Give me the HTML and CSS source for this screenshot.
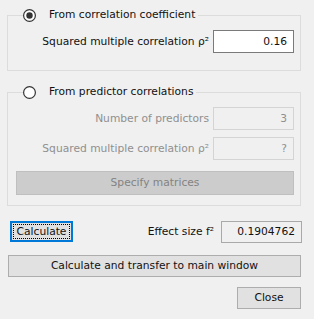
FILE: index.html
```html
<!DOCTYPE html>
<html>
<head>
<meta charset="utf-8">
<link rel="stylesheet" href="styles.css">
</head>
<body>
<div class="dialog">
  <fieldset class="group g1">
    <legend class="legend">
      <svg class="radio" width="13" height="13" viewBox="0 0 13 13"><circle cx="6.5" cy="6.5" r="5.9" fill="#ffffff" stroke="#333333" stroke-width="1.2"/><circle cx="6.5" cy="6.5" r="3.2" fill="#333333"/></svg>
      <span>From correlation coefficient</span>
    </legend>
    <div class="row">
      <span class="lbl">Squared multiple correlation ρ²</span>
      <div class="field">0.16</div>
    </div>
  </fieldset>

  <fieldset class="group g2">
    <legend class="legend">
      <svg class="radio" width="13" height="13" viewBox="0 0 13 13"><circle cx="6.5" cy="6.5" r="5.9" fill="#ffffff" stroke="#333333" stroke-width="1.2"/></svg>
      <span>From predictor correlations</span>
    </legend>
    <div class="row">
      <span class="lbl dis">Number of predictors</span>
      <div class="field dis">3</div>
    </div>
    <div class="row row2">
      <span class="lbl dis">Squared multiple correlation ρ²</span>
      <div class="field dis">?</div>
    </div>
    <div class="btn btn-dis">Specify matrices</div>
  </fieldset>

  <div class="calc-row">
    <button class="btn btn-focus"><span class="focus-rect">Calculate</span></button>
    <span class="lbl effect">Effect size f²</span>
    <div class="field out">0.1904762</div>
  </div>

  <button class="btn btn-full">Calculate and transfer to main window</button>

  <div class="close-row">
    <button class="btn btn-close">Close</button>
  </div>
</div>
</body>
</html>
```

FILE: styles.css
```css
html, body {
  margin: 0;
  padding: 0;
  background: #f0f0f0;
}
body {
  font-family: "DejaVu Sans", Verdana, sans-serif;
  font-size: 10.7px;
  color: #111111;
}
.dialog {
  width: 294px;
  padding: 8px 13px 0 7px;
}
.group {
  margin: 0;
  padding: 8px 6px 17px 7px;
  border: 1px solid #dcdcdc;
  min-width: 0;
}
.g2 {
  margin-top: 14px;
  padding-bottom: 10px;
}
.legend {
  display: flex;
  align-items: center;
  height: 14px;
  line-height: 14px;
  padding: 0 3px 0 0;
  margin-left: 8px;
}
.radio {
  display: block;
  margin-right: 13px;
}
.row {
  display: flex;
  justify-content: flex-end;
  align-items: center;
  gap: 4px;
}
.row2 {
  margin-top: 7px;
}
.lbl {
  white-space: nowrap;
}
.lbl.dis {
  color: #8f8f8f;
}
.field {
  box-sizing: border-box;
  width: 81px;
  height: 23px;
  line-height: 21px;
  border: 1px solid #7a7a7a;
  background: #ffffff;
  text-align: right;
  padding-right: 6px;
}
.field.dis {
  border-color: #d4d4d4;
  background: #f0f0f0;
  color: #8f8f8f;
}
.btn {
  box-sizing: border-box;
  font-family: "DejaVu Sans", Verdana, sans-serif;
  font-size: 10.7px;
  color: #111111;
  background: #e1e1e1;
  border: 1px solid #adadad;
  border-radius: 0;
  padding: 0;
  margin: 0;
  height: 22px;
  line-height: 20px;
  text-align: center;
  display: block;
}
.btn-dis {
  margin-top: 11px;
  width: 278px;
  margin-left: 1px;
  height: 24px;
  line-height: 22px;
  background: #cccccc;
  border-color: #bfbfbf;
  color: #838383;
}
.calc-row {
  margin-top: 15px;
  display: flex;
  align-items: flex-start;
  margin-right: -1px;
}
.btn-focus {
  width: 63px;
  height: 21px;
  margin-left: 3px;
  border: 2px solid #0078d7;
  padding: 1px;
  display: flex;
}
.focus-rect {
  flex: 1;
  border: 1px dotted #000000;
  line-height: 13px;
  text-align: center;
}
.effect {
  margin-left: auto;
  margin-right: 7px;
  line-height: 22px;
}
.field.out {
  width: 81px;
  height: 22px;
  line-height: 20px;
  background: #f0f0f0;
  border-color: #a9a9a9;
}
.btn-full {
  margin-top: 12px;
  margin-left: 1px;
  width: 293px;
}
.close-row {
  margin-top: 10px;
  display: flex;
  justify-content: flex-end;
}
.btn-close {
  width: 64px;
}
```
